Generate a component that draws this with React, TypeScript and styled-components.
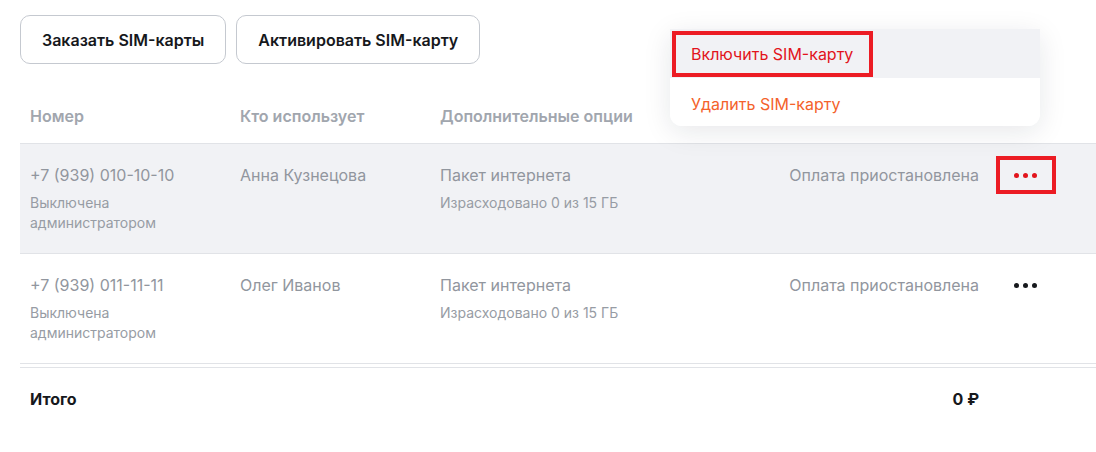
import React from "react";
import styled, { createGlobalStyle } from "styled-components";

const Global = createGlobalStyle`
  html, body { margin: 0; padding: 0; background: #fff; }
  body { font-family: Inter, "Noto Sans", "Liberation Sans", sans-serif; color: #1c1e22; }
  * { box-sizing: border-box; }
`;

const Page = styled.div`
  position: relative;
  width: 1096px;
  height: 452px;
  overflow: hidden;
  padding: 15px 0 0 20px;
`;

const Toolbar = styled.div`
  display: flex;
  gap: 10px;
`;

const Button = styled.button`
  height: 49px;
  padding: 0 21px;
  border: 1px solid #c5c9d0;
  border-radius: 10px;
  background: #fff;
  font-family: inherit;
  font-size: 16px;
  font-weight: 600;
  color: #16181c;
`;

const Table = styled.div`
  margin-top: 32px;
  width: 1076px;
`;

const Row = styled.div<{ $bg?: string; $h: number; $top?: boolean }>`
  display: grid;
  grid-template-columns: 210px 200px 1fr 200px 117px;
  padding-left: 10px;
  height: ${(p) => p.$h}px;
  background: ${(p) => p.$bg || "transparent"};
  border-top: ${(p) => (p.$top ? "1px solid #e1e3e7" : "none")};
`;

const HeadCell = styled.div<{ $right?: boolean }>`
  font-size: 16px;
  font-weight: 600;
  color: #a1a6ae;
  padding-top: 10px;
  text-align: ${(p) => (p.$right ? "right" : "left")};
`;

const Cell = styled.div<{ $right?: boolean }>`
  padding-top: 20px;
  text-align: ${(p) => (p.$right ? "right" : "left")};
`;

const Main = styled.div`
  font-size: 16px;
  line-height: 22px;
  color: #91969e;
`;

const Sub = styled.div<{ $wide?: boolean }>`
  margin-top: 7px;
  font-size: 14px;
  line-height: 20px;
  color: #979ca4;
  width: ${(p) => (p.$wide ? "auto" : "150px")};
`;

const DotsCell = styled.div`
  padding-top: 12px;
  padding-left: 17px;
`;

const DotsButton = styled.button<{ $active?: boolean }>`
  width: 60px;
  height: 38px;
  display: flex;
  align-items: center;
  justify-content: center;
  gap: 4px;
  background: transparent;
  border: 4px solid ${(p) => (p.$active ? "#ec1c24" : "transparent")};
  padding: 0 1px 0 0;
`;

const Dot = styled.span<{ $red?: boolean }>`
  width: 5px;
  height: 5px;
  border-radius: 50%;
  background: ${(p) => (p.$red ? "#e2141c" : "#17191d")};
`;

const Divider = styled.div`
  height: 5px;
  border-top: 1px solid #e1e3e7;
  border-bottom: 1px solid #e1e3e7;
`;

const TotalRow = styled.div`
  display: grid;
  grid-template-columns: 1fr 200px 117px;
  padding-left: 10px;
  padding-top: 21px;
  font-size: 16px;
  font-weight: 700;
  color: #16181c;
`;

const TotalValue = styled.div`
  text-align: right;
`;

const Menu = styled.div`
  position: absolute;
  left: 670px;
  top: 29px;
  width: 370px;
  background: #fff;
  border-radius: 0 0 12px 12px;
  box-shadow: 0 6px 28px rgba(20, 30, 50, 0.1);
  overflow: hidden;
`;

const MenuItem = styled.div<{ $active?: boolean; $color: string }>`
  position: relative;
  height: ${(p) => (p.$active ? 49 : 48)}px;
  display: flex;
  align-items: center;
  padding-left: 21px;
  padding-top: ${(p) => (p.$active ? 0 : 4)}px;
  font-size: 16px;
  color: ${(p) => p.$color};
  background: ${(p) => (p.$active ? "#f1f2f5" : "#fff")};
`;

const Highlight = styled.span`
  position: absolute;
  left: 2px;
  top: 2px;
  width: 201px;
  height: 46px;
  border: 4px solid #ec1c24;
`;

type Sim = { phone: string; user: string; bg?: string; active?: boolean };

const sims: Sim[] = [
  { phone: "+7 (939) 010-10-10", user: "Анна Кузнецова", bg: "#f1f2f5", active: true },
  { phone: "+7 (939) 011-11-11", user: "Олег Иванов" },
];

export default function App() {
  return (
    <>
      <Global />
      <Page>
        <Toolbar>
          <Button>Заказать SIM-карты</Button>
          <Button>Активировать SIM-карту</Button>
        </Toolbar>
        <Table>
          <Row $h={47}>
            <HeadCell>Номер</HeadCell>
            <HeadCell>Кто использует</HeadCell>
            <HeadCell>Дополнительные опции</HeadCell>
            <HeadCell $right>Статус</HeadCell>
            <HeadCell />
          </Row>
          {sims.map((s) => (
            <Row key={s.phone} $h={110} $bg={s.bg} $top>
              <Cell>
                <Main>{s.phone}</Main>
                <Sub>Выключена администратором</Sub>
              </Cell>
              <Cell>
                <Main>{s.user}</Main>
              </Cell>
              <Cell>
                <Main>Пакет интернета</Main>
                <Sub $wide>Израсходовано 0 из 15 ГБ</Sub>
              </Cell>
              <Cell $right>
                <Main>Оплата приостановлена</Main>
              </Cell>
              <DotsCell>
                <DotsButton $active={s.active}>
                  <Dot $red={s.active} />
                  <Dot $red={s.active} />
                  <Dot $red={s.active} />
                </DotsButton>
              </DotsCell>
            </Row>
          ))}
          <Divider />
          <TotalRow>
            <div>Итого</div>
            <TotalValue>0 ₽</TotalValue>
            <div />
          </TotalRow>
        </Table>
        <Menu>
          <MenuItem $active $color="#e2141c">
            <Highlight />
            Включить SIM-карту
          </MenuItem>
          <MenuItem $color="#f4622b">Удалить SIM-карту</MenuItem>
        </Menu>
      </Page>
    </>
  );
}
